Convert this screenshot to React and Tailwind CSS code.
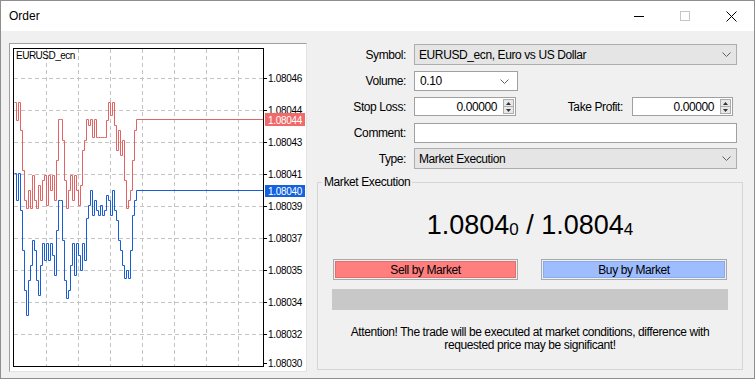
import React from "react";

const red = [[14,102],[16,120],[18,102],[20,130],[22,170],[24,200],[26,208],[28,190],[30,208],[32,175],[34,200],[36,208],[38,185],[40,200],[42,180],[44,175],[46,205],[48,175],[50,190],[52,175],[54,200],[56,160],[58,119],[60,119],[62,140],[64,180],[66,208],[68,190],[70,175],[72,200],[74,175],[76,190],[78,205],[80,185],[82,150],[84,140],[86,119],[88,125],[90,119],[92,137],[94,119],[96,137],[98,137],[100,137],[102,137],[104,137],[106,120],[108,102],[110,115],[112,102],[114,125],[116,150],[118,130],[120,155],[122,140],[124,180],[126,208],[128,200],[130,190],[132,160],[134,130],[136,119]];
const blue = [[14,173],[16,200],[18,173],[20,210],[22,250],[24,290],[26,315],[28,280],[30,265],[32,240],[34,250],[36,280],[38,295],[40,265],[42,243],[44,260],[46,243],[48,260],[50,243],[52,255],[54,275],[56,230],[58,200],[60,200],[62,240],[64,280],[66,298],[68,290],[70,265],[72,243],[74,275],[76,243],[78,255],[80,270],[82,243],[84,260],[86,218],[88,205],[90,190],[92,215],[94,200],[96,210],[98,215],[100,205],[102,215],[104,210],[106,195],[108,200],[110,215],[112,190],[114,210],[116,220],[118,240],[120,250],[122,265],[124,278],[126,270],[128,278],[130,250],[132,215],[134,200],[136,190]];

function stepPath(pts, endX) {
  let d = `M${pts[0][0] + 0.5} ${pts[0][1] + 0.5}`;
  for (let i = 1; i < pts.length; i++) {
    d += ` H${pts[i][0] + 0.5} V${pts[i][1] + 0.5}`;
  }
  d += ` H${endX}`;
  return d;
}

const hGrid = [78, 110, 142, 174, 206, 238, 270, 302, 334];
const vGrid = [46, 78, 110, 142, 174, 206, 238];
const labels = [
  [78, "1.08046"], [110, "1.08044"], [142, "1.08043"], [174, "1.08041"], [206, "1.08039"],
  [238, "1.08037"], [270, "1.08035"], [302, "1.08034"], [334, "1.08032"], [363, "1.08030"],
];

function Chart() {
  return (
    <svg width="296" height="327" viewBox="10 44 296 327" className="block">
      <rect x="10" y="44" width="296" height="327" fill="#ffffff" />
      {hGrid.map((y) => (
        <line key={"h" + y} x1="14" x2="263" y1={y + 0.5} y2={y + 0.5} stroke="#c4c4c4" strokeDasharray="4 3" />
      ))}
      {vGrid.map((x) => (
        <line key={"v" + x} x1={x + 0.5} x2={x + 0.5} y1="49" y2="366" stroke="#c4c4c4" strokeDasharray="4 3" />
      ))}
      <path d={stepPath(red, 263)} fill="none" stroke="#e36464" strokeWidth="1" />
      <path d={stepPath(blue, 263)} fill="none" stroke="#1a5ed3" strokeWidth="1" />
      <rect x="13.5" y="48.5" width="250" height="318" fill="none" stroke="#000000" />
      {labels.map(([y, t]) => (
        <g key={t}>
          <line x1="264" x2="267" y1={y + 0.5} y2={y + 0.5} stroke="#000" />
          <text x="268" y={y + 3.5} fontSize="10" letterSpacing="-0.3" fill="#000" fontFamily="Liberation Sans, Arial, sans-serif">{t}</text>
        </g>
      ))}
      <rect x="265" y="113" width="40" height="13" fill="#f06a6a" />
      <text x="268" y="123.5" fontSize="10" letterSpacing="-0.3" fill="#fff" fontFamily="Liberation Sans, Arial, sans-serif">1.08044</text>
      <rect x="265" y="185" width="40" height="12" fill="#1462e0" />
      <text x="268" y="195" fontSize="10" letterSpacing="-0.3" fill="#fff" fontFamily="Liberation Sans, Arial, sans-serif">1.08040</text>
      <text x="16" y="59" fontSize="10" letterSpacing="-0.5" fill="#000" fontFamily="Liberation Sans, Arial, sans-serif">EURUSD_ecn</text>
    </svg>
  );
}

function Chevron() {
  return (
    <svg width="9" height="5" viewBox="0 0 9 5" className="block">
      <polyline points="0.5,0.5 4.5,4.5 8.5,0.5" fill="none" stroke="#606060" strokeWidth="1" />
    </svg>
  );
}

function Spin() {
  return (
    <div className="w-[11px] h-[15px] border border-[#adadad] bg-[#e8e8e8] flex flex-col">
      <div className="flex-1 flex items-center justify-center border-b border-[#adadad]">
        <svg width="5" height="3" viewBox="0 0 5 3" className="block"><polygon points="0,3 2.5,0 5,3" fill="#333" /></svg>
      </div>
      <div className="flex-1 flex items-center justify-center">
        <svg width="5" height="3" viewBox="0 0 5 3" className="block"><polygon points="0,0 2.5,3 5,0" fill="#333" /></svg>
      </div>
    </div>
  );
}

function Label({ children }) {
  return <div className="w-[89px] text-right shrink-0">{children}</div>;
}

export default function App() {
  return (
    <div className="w-[755px] h-[381px] bg-white font-['Liberation_Sans',Arial,sans-serif] text-[12px] tracking-[-0.4px] text-black leading-none">
      <div className="w-[755px] h-[379px] border border-[#8e8e8e] flex flex-col bg-[#f0f0f0]">
        {/* Title bar */}
        <div className="h-[30px] bg-white flex items-center shrink-0">
          <div className="pl-[8px] text-[12px] tracking-normal">Order</div>
          <div className="ml-auto flex h-full">
            <div className="w-[46px] h-full flex items-center justify-center">
              <svg width="10" height="10" viewBox="0 0 10 10"><line x1="0" x2="10" y1="5.5" y2="5.5" stroke="#000" /></svg>
            </div>
            <div className="w-[46px] h-full flex items-center justify-center">
              <svg width="10" height="10" viewBox="0 0 10 10"><rect x="0.5" y="0.5" width="9" height="9" fill="none" stroke="#c6c6c6" /></svg>
            </div>
            <div className="w-[46px] h-full flex items-center justify-center">
              <svg width="11" height="11" viewBox="0 0 11 11"><path d="M0.5 0.5 L10.5 10.5 M10.5 0.5 L0.5 10.5" stroke="#000" strokeWidth="1" /></svg>
            </div>
          </div>
        </div>

        {/* Body */}
        <div className="flex pt-[12px] pl-[8px]">
          {/* Chart frame */}
          <div className="w-[298px] h-[329px] border-t border-l border-[#a0a0a0] border-r border-b border-r-[#e3e3e3] border-b-[#e3e3e3] bg-white shrink-0">
            <Chart />
          </div>

          {/* Right column */}
          <div className="ml-[10px] w-[426px] flex flex-col pt-[1px]">
            <div className="flex items-center h-[21px] pr-[6px]">
              <Label>Symbol:</Label>
              <div className="ml-[8px] flex-1 h-full border border-[#adadad] bg-[#e5e5e5] flex items-center pl-[4px] pr-[5px]">
                <span>EURUSD_ecn, Euro vs US Dollar</span>
                <span className="ml-auto"><Chevron /></span>
              </div>
            </div>

            <div className="flex items-center h-[20px] mt-[6px] pr-[6px]">
              <Label>Volume:</Label>
              <div className="ml-[8px] w-[104px] h-full border border-[#a0a0a0] bg-white flex items-center pl-[5px] pr-[8px]">
                <span>0.10</span>
                <span className="ml-auto"><Chevron /></span>
              </div>
            </div>

            <div className="flex items-center h-[19px] mt-[6px]">
              <Label>Stop Loss:</Label>
              <div className="ml-[8px] w-[102px] h-full border border-[#a0a0a0] bg-white flex items-center pr-[1px]">
                <span className="flex-1 text-right pr-[6px]">0.00000</span>
                <Spin />
              </div>
              <div className="flex-1 text-right pr-[9px]">Take Profit:</div>
              <div className="w-[101px] mr-[10px] h-full border border-[#a0a0a0] bg-white flex items-center pr-[1px]">
                <span className="flex-1 text-right pr-[6px]">0.00000</span>
                <Spin />
              </div>
            </div>

            <div className="flex items-center h-[20px] mt-[7px] pr-[6px]">
              <Label>Comment:</Label>
              <div className="ml-[8px] flex-1 h-full border border-[#a0a0a0] bg-white"></div>
            </div>

            <div className="flex items-center h-[21px] mt-[5px] pr-[6px]">
              <Label>Type:</Label>
              <div className="ml-[8px] flex-1 h-full border border-[#adadad] bg-[#e5e5e5] flex items-center pl-[4px] pr-[5px]">
                <span>Market Execution</span>
                <span className="ml-auto"><Chevron /></span>
              </div>
            </div>

            {/* Group box */}
            <fieldset className="mt-[7px] h-[194px] border border-[#d5d5d5] px-[15px] pb-[0px]">
              <legend className="-ml-[11px] px-[2px]">Market Execution</legend>
              <div className="mt-[21px] h-[30px] flex items-end justify-center tracking-normal">
                <span className="text-[27px] leading-none">1.0804</span>
                <span className="text-[17px] leading-none pb-[1px]">0</span>
                <span className="text-[27px] leading-none">&nbsp;/ 1.0804</span>
                <span className="text-[17px] leading-none pb-[1px]">4</span>
              </div>
              <div className="mt-[20px] flex justify-between">
                <div className="w-[185px] h-[21px] border border-[#a9a9a9] p-[1px] bg-[#f0f0f0]">
                  <div className="w-full h-full bg-[#ff7f7f] border border-[#e07070] flex items-center justify-center">Sell by Market</div>
                </div>
                <div className="w-[186px] h-[21px] border border-[#a9a9a9] p-[1px] bg-[#f0f0f0]">
                  <div className="w-full h-full bg-[#9dbdff] border border-[#8aaaf0] flex items-center justify-center">Buy by Market</div>
                </div>
              </div>
              <div className="mt-[9px] h-[21px] -mx-[1px] bg-[#c8c8c8]"></div>
              <div className="mt-[16px] text-center leading-[13px]">
                Attention! The trade will be executed at market conditions, difference with<br />
                requested price may be significant!
              </div>
            </fieldset>
          </div>
        </div>
      </div>
    </div>
  );
}
